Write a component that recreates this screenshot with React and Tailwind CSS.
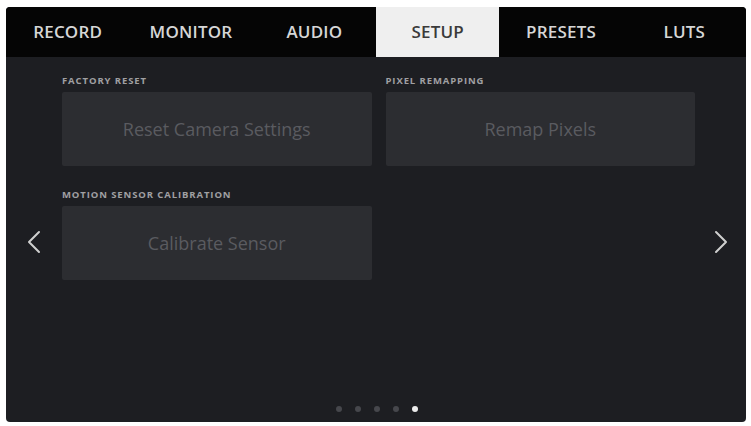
import React from "react";

const tabs = ["RECORD", "MONITOR", "AUDIO", "SETUP", "PRESETS", "LUTS"];

function Chevron({ dir }) {
  return (
    <svg width="16" height="24" viewBox="0 0 16 24" fill="none">
      <polyline
        points={dir === "left" ? "13,2 3,12 13,22" : "3,2 13,12 3,22"}
        stroke="#cfcfcf"
        strokeWidth="2"
        strokeLinecap="round"
        strokeLinejoin="round"
      />
    </svg>
  );
}

function Setting({ label, text }) {
  return (
    <div className="flex flex-col">
      <div className="text-[9.5px] leading-[12px] font-bold tracking-[0.9px] text-[#a0a0a2]">{label}</div>
      <div className="mt-[5px] h-[74px] bg-[#2c2d31] rounded-[2px] flex items-center justify-center text-[18px] text-[#5a5b60]">
        {text}
      </div>
    </div>
  );
}

export default function App() {
  return (
    <div className="w-[751px] h-[426px] bg-white pt-[7px] pl-[6px]" style={{ fontFamily: '"Open Sans", sans-serif' }}>
      <div className="w-[740px] h-[415px] rounded-[4px] overflow-hidden bg-[#1d1e22] flex flex-col">
        <div className="h-[50px] bg-[#050505] grid grid-cols-6">
          {tabs.map((t) => (
            <div
              key={t}
              className={
                t === "SETUP"
                  ? "flex items-center justify-center bg-[#efefef] text-[#3a3a3a] text-[17px] font-semibold tracking-[0.2px]"
                  : "flex items-center justify-center text-[#d6d6d6] text-[17px] font-semibold tracking-[0.2px]"
              }
            >
              {t}
            </div>
          ))}
        </div>
        <div className="flex-1 flex">
          <div className="w-[56px] flex items-center justify-center pt-[4px]">
            <Chevron dir="left" />
          </div>
          <div className="flex-1 flex flex-col pt-[18px]">
            <div className="grid grid-cols-2 gap-x-[14px] gap-y-[23px]">
              <Setting label="FACTORY RESET" text="Reset Camera Settings" />
              <Setting label="PIXEL REMAPPING" text="Remap Pixels" />
              <Setting label="MOTION SENSOR CALIBRATION" text="Calibrate Sensor" />
            </div>
            <div className="mt-auto mb-[10px] flex justify-center gap-[13px] pr-[4px]">
              <div className="w-[6px] h-[6px] rounded-full bg-[#46474c]" />
              <div className="w-[6px] h-[6px] rounded-full bg-[#46474c]" />
              <div className="w-[6px] h-[6px] rounded-full bg-[#46474c]" />
              <div className="w-[6px] h-[6px] rounded-full bg-[#46474c]" />
              <div className="w-[6px] h-[6px] rounded-full bg-[#ececec]" />
            </div>
          </div>
          <div className="w-[51px] flex items-center justify-center pt-[4px]">
            <Chevron dir="right" />
          </div>
        </div>
      </div>
    </div>
  );
}
